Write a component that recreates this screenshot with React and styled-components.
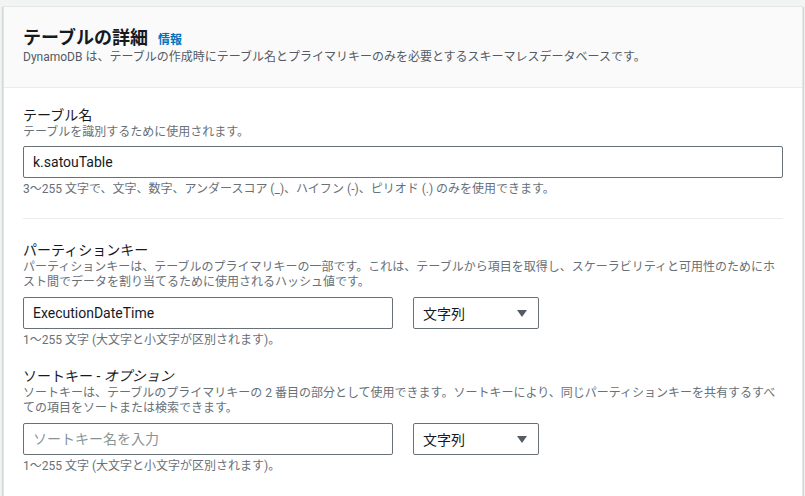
import React from "react";
import styled, { createGlobalStyle } from "styled-components";

const GlobalStyle = createGlobalStyle`
    html, body {
        margin: 0;
        background-color: #f2f3f3;
        font-family: Roboto, "Noto Sans CJK JP", sans-serif;
        color: #16191f;
    }
`;

const Page = styled.div`
    padding: 6px 2px 0 3px;
    height: 490px;
    overflow: hidden;
`;

const Card = styled.section`
    background-color: #fff;
    border: 1px solid #e4e7e7;
    box-shadow: 0 1px 1px 0 rgba(0, 28, 36, 0.2), 1px 1px 1px 0 rgba(0, 28, 36, 0.1),
        -1px 1px 1px 0 rgba(0, 28, 36, 0.1);
`;

const Header = styled.header`
    background-color: #fafafa;
    border-bottom: 1px solid #eaeded;
    padding: 20px 19px 22px;
`;

const TitleRow = styled.div`
    display: flex;
    align-items: baseline;
    gap: 10px;
`;

const Title = styled.h2`
    margin: 0;
    font-size: 18px;
    line-height: 22px;
    font-weight: 700;
`;

const InfoLink = styled.a`
    font-size: 12px;
    font-weight: 700;
    color: #0073bb;
    text-decoration: none;
`;

const HeaderText = styled.p`
    margin: 0;
    font-size: 12px;
    line-height: 16px;
    color: #545b64;
`;

const Body = styled.div`
    padding: 17px 19px 30px;
`;

const Field = styled.div`
    display: flex;
    flex-direction: column;
    margin-top: ${(p) => p.$top || 0}px;
`;

const Label = styled.label`
    font-size: 14px;
    line-height: 20px;
`;

const Desc = styled.p`
    margin: 0 0 ${(p) => p.$gap || 7}px;
    font-size: 12px;
    line-height: 15px;
    color: #687078;
`;

const Row = styled.div`
    display: flex;
    gap: 20px;
`;

const Input = styled.input`
    box-sizing: border-box;
    width: ${(p) => p.$width || "100%"};
    height: 32px;
    padding: 0 9px;
    border: 1px solid #687078;
    border-radius: 2px;
    font-family: inherit;
    font-size: 14px;
    color: #16191f;
    background: #fff;
    outline: none;

    &::placeholder {
        color: #879596;
    }
`;

const Select = styled.div`
    box-sizing: border-box;
    width: 126px;
    height: 32px;
    padding: 0 11px 0 9px;
    border: 1px solid #687078;
    border-radius: 2px;
    display: flex;
    align-items: center;
    justify-content: space-between;
    font-size: 14px;
`;

const Caret = styled.span`
    width: 0;
    height: 0;
    border-left: 5px solid transparent;
    border-right: 5px solid transparent;
    border-top: 7px solid #545b64;
`;

const Hint = styled.p`
    margin: 4px 0 0;
    font-size: 12px;
    line-height: 15px;
    color: #687078;
`;

const Divider = styled.hr`
    margin: 21px 0 0;
    border: none;
    border-top: 1px solid #eaeded;
`;

const KeyField = ({ label, desc, value, placeholder, top }) => (
    <Field $top={top}>
        <Label>{label}</Label>
        <Desc>{desc}</Desc>
        <Row>
            <Input $width="370px" defaultValue={value} placeholder={placeholder} />
            <Select>
                文字列
                <Caret />
            </Select>
        </Row>
        <Hint>1〜255 文字 (大文字と小文字が区別されます)。</Hint>
    </Field>
);

const App = () => {
    return (
        <Page>
            <GlobalStyle />
            <Card>
                <Header>
                    <TitleRow>
                        <Title>テーブルの詳細</Title>
                        <InfoLink href="#">情報</InfoLink>
                    </TitleRow>
                    <HeaderText>
                        DynamoDB は、テーブルの作成時にテーブル名とプライマリキーのみを必要とするスキーマレスデータベースです。
                    </HeaderText>
                </Header>
                <Body>
                    <Field>
                        <Label>テーブル名</Label>
                        <Desc $gap={6}>テーブルを識別するために使用されます。</Desc>
                        <Input defaultValue="k.satouTable" />
                        <Hint>
                            3〜255 文字で、文字、数字、アンダースコア (_)、ハイフン (-)、ピリオド (.) のみを使用できます。
                        </Hint>
                    </Field>
                    <Divider />
                    <KeyField
                        top={21}
                        label="パーティションキー"
                        desc="パーティションキーは、テーブルのプライマリキーの一部です。これは、テーブルから項目を取得し、スケーラビリティと可用性のためにホスト間でデータを割り当てるために使用されるハッシュ値です。"
                        value="ExecutionDateTime"
                    />
                    <KeyField
                        top={18}
                        label={
                            <>
                                ソートキー - <i>オプション</i>
                            </>
                        }
                        desc="ソートキーは、テーブルのプライマリキーの 2 番目の部分として使用できます。ソートキーにより、同じパーティションキーを共有するすべての項目をソートまたは検索できます。"
                        placeholder="ソートキー名を入力"
                    />
                </Body>
            </Card>
        </Page>
    );
};

export default App;
